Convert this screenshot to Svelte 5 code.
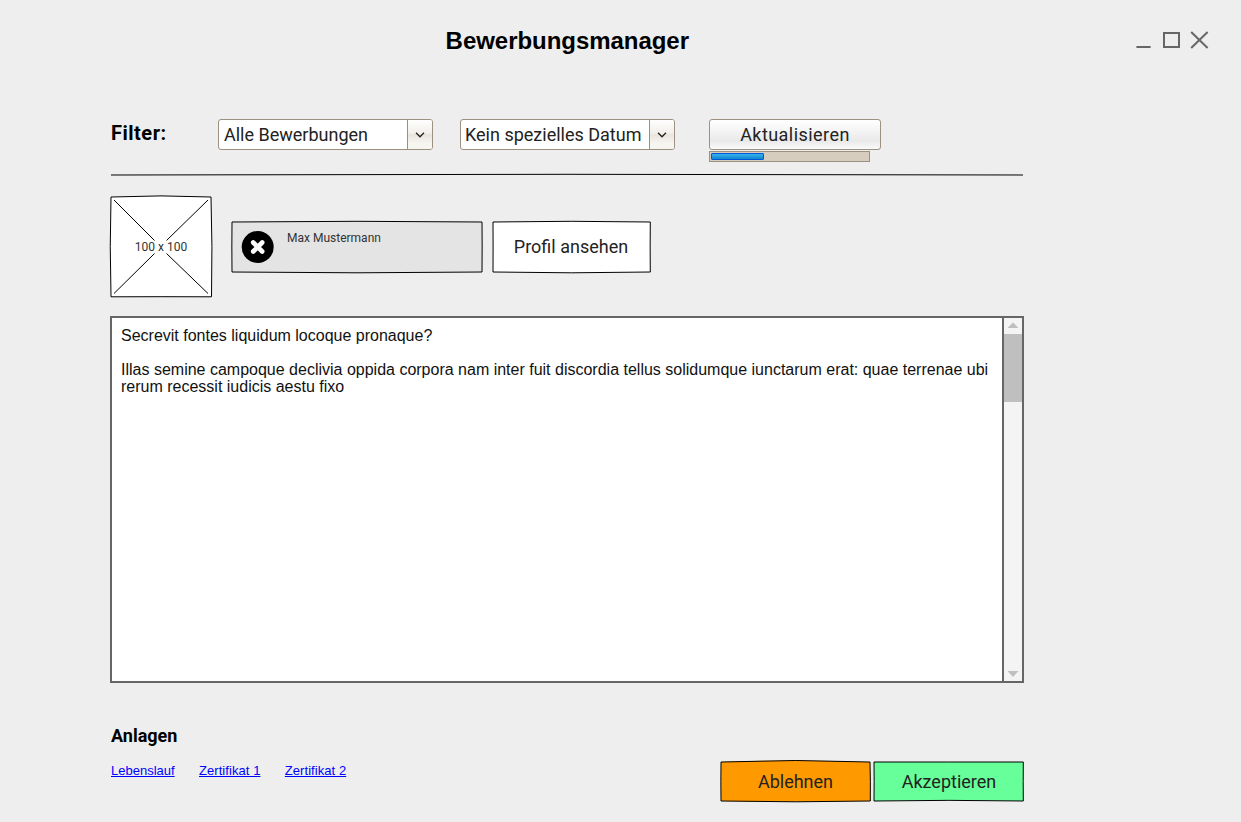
<script>
  const filters = [
    { label: 'Alle Bewerbungen', cls: 'all' },
    { label: 'Kein spezielles Datum', cls: 'date' }
  ];
  const attachments = ['Lebenslauf', 'Zertifikat 1', 'Zertifikat 2'];
  const progress = 33.5;
</script>

{#snippet outline(w, h, fill, d)}
  <svg class="outline" width={w} height={h} viewBox="0 0 {w} {h}" aria-hidden="true">
    <path {d} {fill} stroke="#000" stroke-linejoin="round" />
  </svg>
{/snippet}

<div class="window">
  <header>
    <h1>Bewerbungsmanager</h1>
    <svg class="controls" width="76" height="22" viewBox="0 0 76 22" fill="none" stroke="#666" stroke-width="2">
      <path d="M1.4 17H15.6M29 3H44V17H29ZM56.2 2L72.6 18M72.6 2L56.2 18" />
    </svg>
  </header>

  <main>
    <section class="filters">
      <h2>Filter:</h2>
      {#each filters as f}
        <div class="select {f.cls}">
          <span class="value">{f.label}</span>
          <span class="arrow">
            <svg width="10" height="6" viewBox="0 0 10 6" fill="none" stroke="#222" stroke-width="1.3"><path d="M1 .8L5 4.8L9 .8" /></svg>
          </span>
        </div>
      {/each}
      <div class="refresh">
        <button class="update">Aktualisieren</button>
        <div class="progress"><div class="bar" style="width: {progress}%"></div></div>
      </div>
    </section>

    <svg class="rule" width="912" height="4" viewBox="0 0 912 4"><path d="M0 2Q456 .6 912 2" fill="none" stroke="#000" /></svg>

    <section class="applicant">
      <div class="sketch photo">
        {@render outline(100, 100, '#fff', 'M0 1Q50 -1.2 100 1Q101.6 50 100.5 100.8Q50 100.6 0 100.8Q-1.5 50 0 1Z')}
        <svg class="outline" width="100" height="100" viewBox="0 0 100 100" stroke="#000">
          <path d="M3 4L43.5 44.5M97 4L55.5 44.5M3 97.5L43.5 57.5M97 97.5L55.5 57.5" />
        </svg>
        <span>100 x 100</span>
      </div>
      <div class="sketch person">
        {@render outline(250, 50, '#e4e4e4', 'M0 0Q125 -1.4 250 0Q250.3 25 250 50Q125 51.6 0 50Q-.3 25 0 0Z')}
        <svg class="badge" width="32" height="32" viewBox="0 0 32 32">
          <circle cx="15.7" cy="16" r="16" />
          <path d="M11.2 11.5L20.2 20.5M20.2 11.5L11.2 20.5" stroke="#fff" stroke-width="4.6" stroke-linecap="round" />
        </svg>
        <span>Max Mustermann</span>
      </div>
      <button class="sketch profile">
        {@render outline(157, 50, '#fff', 'M0 0Q78 -1.4 157.3 0Q157 25 157.3 50Q78 51.6 0 50Q.2 25 0 0Z')}
        <span>Profil ansehen</span>
      </button>
    </section>

    <section class="letter">
      <div class="text">
        <p>Secrevit fontes liquidum locoque pronaque?</p>
        <p>Illas semine campoque declivia oppida corpora nam inter fuit discordia tellus solidumque iunctarum erat: quae terrenae ubi<br />rerum recessit iudicis aestu fixo</p>
      </div>
      <div class="scrollbar">
        <svg width="18" height="16" viewBox="0 0 18 16"><path d="M3.5 10L9 4.5L14.5 10Z" fill="#bfbfbf" /></svg>
        <div class="thumb"></div>
        <svg width="18" height="16" viewBox="0 0 18 16"><path d="M3.5 6L9 12L14.5 6Z" fill="#bfbfbf" /></svg>
      </div>
    </section>

    <footer>
      <div class="attachments">
        <h3>Anlagen</h3>
        <nav>{#each attachments as a}<a href="#top">{a}</a>{/each}</nav>
      </div>
      <div class="actions">
        <button class="sketch reject">
          {@render outline(149, 39, '#ff9900', 'M0 0Q75 -3 149 0Q149.6 20 149.3 39Q75 40.6 0 39Q-.3 20 0 0Z')}
          <span>Ablehnen</span>
        </button>
        <button class="sketch accept">
          {@render outline(149, 39, '#66ff99', 'M0 0Q75 0 149.3 0Q149.1 20 149.3 39Q75 37.7 0 39Q.3 20 0 0Z')}
          <span>Akzeptieren</span>
        </button>
      </div>
    </footer>
  </main>
</div>

<style>
  :global(body) { background: #eee; }
  .window {
    box-sizing: border-box;
    width: 1241px;
    height: 822px;
    overflow: hidden;
    background: #eee;
    color: #000;
    font-family: Roboto, sans-serif;
  }
  h1, h2, h3, p { margin: 0; }
  span, p { white-space: nowrap; }
  header {
    display: flex;
    justify-content: space-between;
    padding: 26px 30px 0 445.6px;
    height: 93px;
    box-sizing: border-box;
  }
  h1 { font: bold 24px/30px "Liberation Sans", sans-serif; letter-spacing: -.04px; }
  .controls { margin-top: 4px; }
  main { width: 912px; margin-left: 111px; }
  .filters { display: flex; height: 54px; padding-top: 26px; }
  h2 { width: 107px; font-size: 20px; line-height: 28px; font-weight: 700; letter-spacing: .5px; }
  .select {
    box-sizing: border-box;
    display: flex;
    width: 215px;
    height: 31px;
    border: 1px solid #9c9080;
    border-radius: 3px;
    background: #fff;
    overflow: hidden;
    color: #222;
    font-size: 18px;
    line-height: 29px;
  }
  .all { margin-right: 27px; }
  .date { margin-right: 34px; }
  .value { flex: 1; padding-left: 5px; }
  .date .value { padding-left: 4px; }
  .arrow {
    display: grid;
    place-items: center;
    box-sizing: border-box;
    width: 25px;
    padding-top: 1px;
    border-left: 1px solid #9c9080;
    background: linear-gradient(#fff, #f1eee8 48%, #e9e4dc 50%, #f7f5f0 80%, #f7f5f0);
  }
  .arrow svg { display: block; }
  button { font-family: inherit; padding: 0; border: 0; color: #222; font-size: 18px; }
  .update {
    display: block;
    box-sizing: border-box;
    width: 172px;
    height: 31px;
    border: 1px solid #9c9080;
    border-radius: 3px;
    background: linear-gradient(#fff, #f2f2f2 45%, #e9e9e9 72%, #fafafa);
    line-height: 29px;
    letter-spacing: .45px;
  }
  .progress {
    box-sizing: border-box;
    width: 161px;
    height: 11px;
    margin-top: 1px;
    padding: 1px;
    border: 1px solid #9c9080;
    background: #d6cdbf;
  }
  .bar {
    box-sizing: border-box;
    height: 7px;
    border: 1px solid #0057d8;
    border-radius: 1px;
    background: linear-gradient(#36b2f0, #0e86cf);
  }
  .rule { display: block; overflow: visible; }
  .applicant { box-sizing: border-box; display: flex; height: 140px; padding-top: 19px; }
  .sketch { display: grid; place-items: center; background: none; }
  .sketch > * { grid-area: 1 / 1; z-index: 1; }
  .outline { display: block; overflow: visible; }
  .sketch > .outline { z-index: 0; }
  .photo { width: 100px; height: 100px; margin-right: 21px; font-size: 12px; color: #333; }
  .photo span { padding-top: 2px; }
  .person {
    width: 250px;
    height: 50px;
    margin: 26px 11px 0 0;
    place-items: start;
    font-size: 12px;
    line-height: 14px;
    color: #333;
  }
  .person .badge { margin: 9px 0 0 10px; overflow: visible; }
  .person span { margin: 9px 0 0 55px; }
  .profile { width: 157px; height: 50px; margin-top: 26px; }
  .profile span { padding: 0 1px 2px 0; }
  .letter {
    display: flex;
    box-sizing: border-box;
    width: 914px;
    height: 367px;
    margin: -1px 0 0 -1px;
    border: 2px solid #666;
    background: #fff;
    color: #111;
    font: 16px/17px "Liberation Sans", sans-serif;
  }
  .text { flex: 1; min-width: 0; padding: 9px 0 0 9px; }
  p + p { margin-top: 17px; }
  .scrollbar {
    display: flex;
    flex-direction: column;
    width: 18px;
    border-left: 2px solid #666;
    background: #f4f4f4;
  }
  .scrollbar svg { display: block; flex: none; }
  .thumb { height: 68px; margin-bottom: auto; background: #bfbfbf; }
  footer { display: flex; justify-content: space-between; padding-top: 41px; }
  h3 { font-size: 18px; line-height: 24px; font-weight: 700; }
  nav { display: flex; gap: 24.4px; margin-top: 15px; font: 13px/15px "Liberation Sans", sans-serif; }
  a { color: #00f; }
  a + a { letter-spacing: .06px; }
  .actions { display: flex; gap: 4px; padding-top: 38px; }
  .actions button { width: 149px; height: 39px; }
  .accept span { padding-left: 1px; }
</style>
